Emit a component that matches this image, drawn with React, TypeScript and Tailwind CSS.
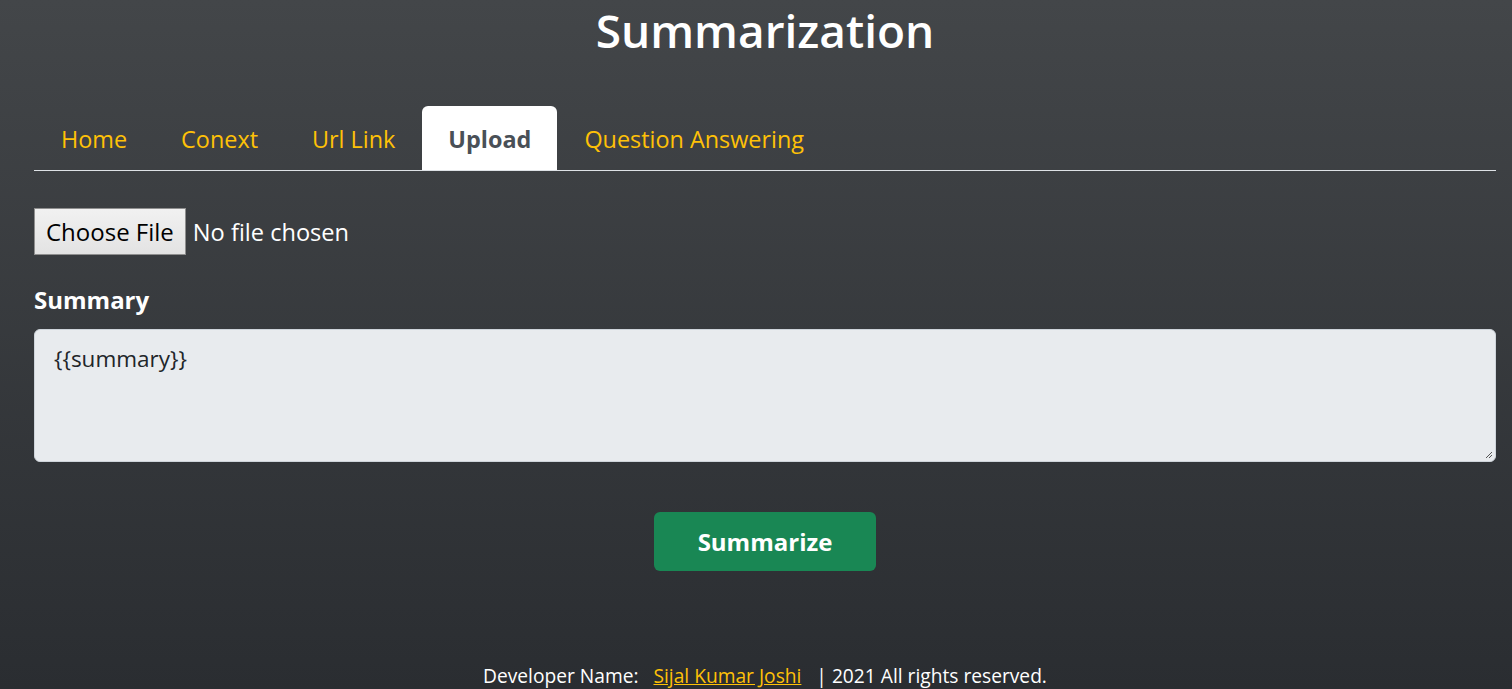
import React from "react";

export default function App() {
  const tabs = ["Home", "Conext", "Url Link", "Upload", "Question Answering"];
  return (
    <div
      className="min-h-[689px] w-full bg-[linear-gradient(180deg,#434649_0%,#2a2d31_100%)] pl-[34px] pr-[16px] text-white"
      style={{ fontFamily: '"Open Sans", "Noto Sans", sans-serif' }}
    >
      <h1 className="pt-[0px] text-center text-[46px] font-semibold leading-[60px]">Summarization</h1>
      <div className="pt-[46px]">
        <ul className="flex border-b border-[#dee2e6]">
          {tabs.map((t) => (
            <li key={t}>
              {t === "Upload" ? (
                <span className="-mb-px block rounded-t-[6px] bg-white px-[26px] pb-[13px] pt-[15px] text-[23.4px] font-bold leading-[36px] text-[#495057]">
                  {t}
                </span>
              ) : (
                <span className="block px-[27px] pb-[13px] pt-[15px] text-[23.4px] leading-[36px] text-[#ffc107]">{t}</span>
              )}
            </li>
          ))}
        </ul>
        <div className="mt-[37px] flex items-center">
          <span className="flex h-[47px] items-center border border-[#8f8f8f] bg-[linear-gradient(180deg,#f1f1f1,#e3e3e3)] px-[11px] text-[24px] text-black">
            Choose File
          </span>
          <span className="ml-[7px] pt-[2px] text-[23.6px] text-white">No file chosen</span>
        </div>
        <div className="mt-[27px] text-[24px] font-bold leading-[36px]">Summary</div>
        <div className="relative mt-[11px] h-[133px] rounded-[6px] border border-[#ced4da] bg-[#e8ebee] px-[19px] pb-[8px] pt-[11px] text-[22.5px] leading-[36px] text-[#212529]">
          {"{{summary}}"}
          <svg className="absolute bottom-[2px] right-[2px]" width="10" height="10" viewBox="0 0 10 10">
            <path d="M9 3 L3 9 M9 6 L6 9" stroke="#555" strokeWidth="1" />
          </svg>
        </div>
        <div className="mt-[50px] flex justify-center">
          <button className="h-[59px] w-[222px] rounded-[6px] bg-[#198754] text-[24px] font-bold text-white">
            Summarize
          </button>
        </div>
        <div className="mt-[93px] text-center text-[19.2px] leading-[24px]">
          Developer Name:&nbsp;&nbsp;&nbsp;
          <span className="text-[#ffc107] underline">Sijal Kumar Joshi</span>
          &nbsp;&nbsp;&nbsp;| 2021 All rights reserved.
        </div>
      </div>
    </div>
  );
}
